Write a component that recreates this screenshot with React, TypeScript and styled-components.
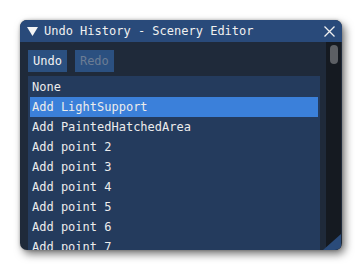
import * as React from "react";
import styled, { createGlobalStyle } from "styled-components";

const GlobalStyle = createGlobalStyle`
  html, body {
    margin: 0;
    padding: 0;
    background: #ffffff;
  }
`;

const Page = styled.div`
  padding: 20px;
  width: 362px;
  height: 271px;
  box-sizing: border-box;
  font-family: "DejaVu Sans Mono", "Liberation Mono", monospace;
  font-size: 12px;
`;

const Window = styled.div`
  position: relative;
  width: 322px;
  height: 230px;
  border-radius: 7px;
  overflow: hidden;
  background: #1f2a3a;
  display: flex;
  flex-direction: column;
  box-shadow: 3px 4px 9px rgba(0, 0, 0, 0.55), 0 0 3px rgba(0, 0, 0, 0.25);
`;

const TitleBar = styled.div`
  height: 22px;
  flex: none;
  background: #294a7a;
  display: flex;
  align-items: center;
  padding: 0 7px 0 7px;
  color: #f0f0f0;
`;

const TitleText = styled.span`
  flex: 1;
  margin-left: 6px;
  white-space: nowrap;
  line-height: 23px;
`;

const Body = styled.div`
  flex: 1;
  display: flex;
  min-height: 0;
`;

const Content = styled.div`
  flex: 1;
  display: flex;
  flex-direction: column;
  padding: 8px 6px 0 8px;
  min-width: 0;
`;

const Toolbar = styled.div`
  display: flex;
  gap: 8px;
  margin-bottom: 4px;
`;

const Button = styled.button<{ $disabled?: boolean }>`
  height: 22px;
  padding: 0 5px;
  border: none;
  border-radius: 0;
  background: #2b5080;
  color: ${(p) => (p.$disabled ? "#6b7d94" : "#f2f2f2")};
  font-family: inherit;
  font-size: 12px;
  line-height: 23px;
  cursor: ${(p) => (p.$disabled ? "default" : "pointer")};
`;

const ListPanel = styled.div`
  flex: 1;
  background: #243b5d;
  padding: 1px 2px 0 2px;
  overflow: hidden;
`;

const Row = styled.div<{ $selected?: boolean }>`
  height: 20px;
  line-height: 21px;
  padding-left: 2px;
  color: #ececec;
  white-space: nowrap;
  overflow: hidden;
  background: ${(p) => (p.$selected ? "#3b80da" : "transparent")};
`;

const Scrollbar = styled.div`
  width: 15px;
  flex: none;
  margin-right: 1px;
  background: #151a21;
  padding: 3px 3px 0 4px;
  box-sizing: border-box;
`;

const Grab = styled.div`
  height: 19px;
  border-radius: 4px;
  background: #5c5f64;
`;

const ResizeGrip = styled.svg`
  position: absolute;
  right: 1px;
  bottom: 0;
`;

const CloseIcon = () => (
  <svg width="11" height="11" viewBox="0 0 11 11">
    <path d="M0.5 0.5 L10.5 10.5 M10.5 0.5 L0.5 10.5" stroke="#f0f0f0" strokeWidth="1.3" fill="none" />
  </svg>
);

const CollapseIcon = () => (
  <svg width="11" height="9" viewBox="0 0 11 9">
    <polygon points="0,0 11,0 5.5,9" fill="#f4f4f4" />
  </svg>
);

const history: string[] = [
  "None",
  "Add LightSupport",
  "Add PaintedHatchedArea",
  "Add point 2",
  "Add point 3",
  "Add point 4",
  "Add point 5",
  "Add point 6",
  "Add point 7",
];

const App: React.FC = () => {
  const [selected, setSelected] = React.useState(1);

  return (
    <Page>
      <GlobalStyle />
      <Window>
        <TitleBar>
          <CollapseIcon />
          <TitleText>Undo History - Scenery Editor</TitleText>
          <CloseIcon />
        </TitleBar>
        <Body>
          <Content>
            <Toolbar>
              <Button>Undo</Button>
              <Button $disabled>Redo</Button>
            </Toolbar>
            <ListPanel>
              {history.map((item, i) => (
                <Row key={item} $selected={i === selected} onClick={() => setSelected(i)}>
                  {item}
                </Row>
              ))}
            </ListPanel>
          </Content>
          <Scrollbar>
            <Grab />
          </Scrollbar>
        </Body>
        <ResizeGrip width="18" height="16" viewBox="0 0 18 16">
          <polygon points="0,16 18,16 18,0" fill="#2a4b7a" />
        </ResizeGrip>
      </Window>
    </Page>
  );
};

export default App;
